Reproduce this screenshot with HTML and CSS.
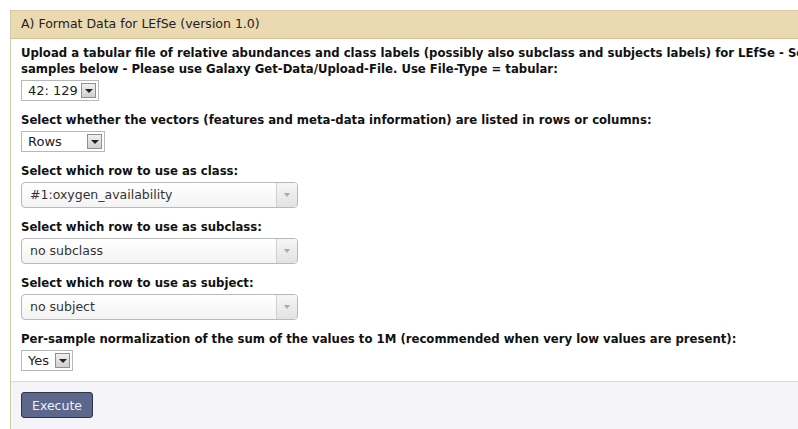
FILE: index.html
```html
<!DOCTYPE html>
<html lang="en">
<head>
  <meta charset="UTF-8">
  <title>Format Data for LEfSe</title>
  <link rel="stylesheet" href="styles.css">
</head>
<body>

  <div class="tool-form">
    <div class="tool-title">A) Format Data for LEfSe (version 1.0)</div>

    <div class="tool-body">
      <div class="form-row">
        <label>Upload a tabular file of relative abundances and class labels (possibly also subclass and subjects labels) for LEfSe - Select the<br>samples below - Please use Galaxy Get-Data/Upload-File. Use File-Type = tabular:</label>
        <div class="plain-select w-data">
          <span>42: 129</span>
          <span class="plain-arrow"></span>
        </div>
      </div>

      <div class="form-row">
        <label>Select whether the vectors (features and meta-data information) are listed in rows or columns:</label>
        <div class="plain-select w-rows">
          <span>Rows</span>
          <span class="plain-arrow"></span>
        </div>
      </div>

      <div class="form-row">
        <label>Select which row to use as class:</label>
        <div class="combo">
          <span class="combo-text">#1:oxygen_availability</span>
          <span class="combo-arrow"></span>
        </div>
      </div>

      <div class="form-row">
        <label>Select which row to use as subclass:</label>
        <div class="combo">
          <span class="combo-text">no subclass</span>
          <span class="combo-arrow"></span>
        </div>
      </div>

      <div class="form-row">
        <label>Select which row to use as subject:</label>
        <div class="combo">
          <span class="combo-text">no subject</span>
          <span class="combo-arrow"></span>
        </div>
      </div>

      <div class="form-row">
        <label>Per-sample normalization of the sum of the values to 1M (recommended when very low values are present):</label>
        <div class="plain-select w-yes">
          <span>Yes</span>
          <span class="plain-arrow"></span>
        </div>
      </div>
    </div>

    <div class="tool-footer">
      <button class="execute">Execute</button>
    </div>
  </div>

</body>
</html>
```

FILE: styles.css
```css
html, body {
  overflow: hidden;
}

body {
  margin: 0;
  padding-top: 10px;
  background-color: #fff;
  font-family: "DejaVu Sans", Verdana, sans-serif;
  font-size: 13px;
  color: #111;
}

.tool-form {
  width: 1100px;
  margin-left: 10px;
  border-left: 1px solid #cfcca8;
  border-top: 1px solid #d8c89c;
}

.tool-title {
  background-color: #ebd9b2;
  border-bottom: 1px solid #d4c08f;
  padding: 0 10px;
  height: 27px;
  line-height: 26px;
  font-size: 12.5px;
  color: #222;
}

.tool-body {
  padding: 6px 10px 10px;
}

.form-row {
  margin-bottom: 11px;
}

.form-row:last-child {
  margin-bottom: 0;
}

.form-row label {
  display: block;
  font-weight: bold;
  line-height: 16px;
  font-size: 11.7px;
  margin-bottom: 3px;
  white-space: nowrap;
}

/* old-style selects with a small square arrow button */
.plain-select {
  display: flex;
  align-items: center;
  justify-content: space-between;
  box-sizing: border-box;
  height: 21px;
  margin-top: 1px;
  padding: 0 2px 0 6px;
  border: 1px solid #b5b8bd;
  background: #fff;
  font-size: 13px;
  color: #222;
}

.w-data { width: 78px; }
.w-rows { width: 84px; }
.w-yes  { width: 52px; }

.plain-arrow {
  width: 15px;
  height: 15px;
  box-sizing: border-box;
  border: 1px solid #8e8f8f;
  background: linear-gradient(#f0f0f0, #cfcfcf);
  position: relative;
}

.plain-arrow::after {
  content: "";
  position: absolute;
  left: 3px;
  top: 5px;
  border-left: 4px solid transparent;
  border-right: 4px solid transparent;
  border-top: 4px solid #222;
}

/* rounded combo box */
.combo {
  display: flex;
  align-items: stretch;
  box-sizing: border-box;
  width: 277px;
  height: 26px;
  border: 1px solid #b9b9b9;
  border-radius: 4px;
  background: linear-gradient(#ffffff, #f3f3f3);
}

.combo-text {
  flex: 1;
  padding-left: 8px;
  line-height: 24px;
  color: #333;
  font-size: 12.5px;
}

.combo-arrow {
  width: 20px;
  border-left: 1px solid #cfcfcf;
  border-radius: 0 3px 3px 0;
  background: linear-gradient(#f6f6f6, #e2e2e2);
  position: relative;
}

.combo-arrow::after {
  content: "";
  position: absolute;
  left: 7px;
  top: 10px;
  border-left: 3px solid transparent;
  border-right: 3px solid transparent;
  border-top: 4px solid #a9a9a9;
}

.tool-footer {
  border-top: 1px solid #d9d9d9;
  background-color: #f5f5f9;
  padding: 10px 10px 20px;
}

.execute {
  font-family: "DejaVu Sans", Verdana, sans-serif;
  font-size: 12.5px;
  color: #eef;
  background-color: #5d678c;
  border: 1px solid #2f3447;
  border-radius: 3px;
  width: 72px;
  height: 26px;
  padding: 0;
}
```
